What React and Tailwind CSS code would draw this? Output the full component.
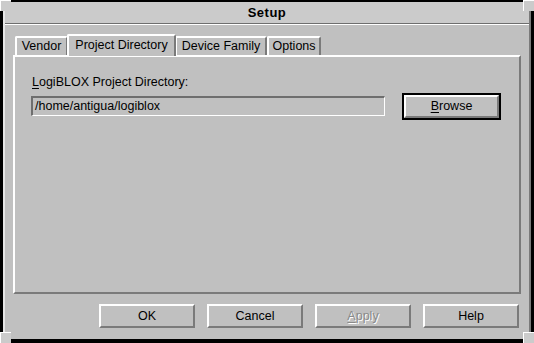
const FONT = { fontFamily: '"Liberation Sans", Arial, Helvetica, sans-serif' };

const TABS = [
  { label: "Vendor", w: "w-[53px]" },
  { label: "Project Directory", w: "w-[109px]", active: true },
  { label: "Device Family", w: "w-[92px]" },
  { label: "Options", w: "w-[54px]" },
];

function Tab({ label, w, active }) {
  if (active) {
    return (
      <div
        className={`${w} h-[22px] -mb-px z-10 -mx-px flex items-center justify-center bg-[#c0c0c0] border-t-2 border-l-2 border-r-2 border-t-white border-l-white border-r-[#7a7a7a] rounded-tl-[2px] rounded-tr-[2px] pb-[1px]`}
      >
        {label}
      </div>
    );
  }
  return (
    <div
      className={`${w} h-[19px] flex items-center justify-center bg-[#c0c0c0] border-t-2 border-l-2 border-r-2 border-t-white border-l-white border-r-[#7a7a7a] rounded-tl-[2px] rounded-tr-[2px]`}
    >
      {label}
    </div>
  );
}

function Button({ children, disabled }) {
  return (
    <button
      className={`w-[96px] h-[24px] flex items-center justify-center bg-[#c0c0c0] border-t-2 border-l-2 border-b-2 border-r-2 border-t-white border-l-white border-b-[#7a7a7a] border-r-[#7a7a7a] ${disabled ? "text-[#8a8a8a] [text-shadow:1px_1px_0_#ffffff]" : "text-black"}`}
    >
      {children}
    </button>
  );
}

export default function App() {
  return (
    <div
      className="w-[534px] h-[343px] bg-black pt-[2px] pl-[3px] pr-[3px] pb-[4px] text-[12.5px] text-black relative"
      style={FONT}
    >
      <div className="w-full h-full flex flex-col bg-[#c0c0c0] border-l-2 border-l-[#e6e6e6] border-r-2 border-r-[#7a7a7a]">
        {/* title bar */}
        <div className="h-[21px] flex items-center justify-center bg-[#cbcbcb] font-bold text-[13px] tracking-[0.5px]">
          Setup
        </div>
        <div className="h-px bg-[#6e6e6e]" />
        <div className="h-px bg-white" />

        {/* tabs */}
        <div className="flex items-end pl-[10px] h-[30px]">
          {TABS.map((t) => (
            <Tab key={t.label} {...t} />
          ))}
        </div>

        {/* panel */}
        <div className="ml-[8px] mr-[8px] h-[239px] border-t-2 border-l-2 border-b-2 border-r-2 border-t-white border-l-white border-b-[#7a7a7a] border-r-[#7a7a7a] px-[16px] pt-[18px]">
          <div className="h-[15px] leading-[15px] pl-px">
            <span className="underline underline-offset-2">L</span>ogiBLOX Project Directory:
          </div>
          <div className="flex items-start mt-[3px]">
            <div className="w-[354px] h-[20px] mt-[3px] flex items-center pl-[2px] border-t-2 border-l-2 border-b border-r border-t-[#6e6e6e] border-l-[#6e6e6e] border-b-white border-r-white">
              /home/antigua/logiblox
            </div>
            <div className="ml-[17px] w-[99px] h-[27px] border-2 border-black">
              <div className="w-full h-full flex items-center justify-center border-t-2 border-l-2 border-b-2 border-r-2 border-t-white border-l-white border-b-[#7a7a7a] border-r-[#7a7a7a]">
                <span>
                  <span className="underline underline-offset-2">B</span>rowse
                </span>
              </div>
            </div>
          </div>
        </div>

        {/* buttons */}
        <div className="flex justify-end gap-[12px] pr-[10px] pt-[10px]">
          <Button>OK</Button>
          <Button>Cancel</Button>
          <Button disabled>
            <span>
              <span className="underline underline-offset-2">A</span>pply
            </span>
          </Button>
          <Button>Help</Button>
        </div>
      </div>

      {/* window manager corner handles */}
      <div className="absolute left-0 top-0 w-[11px] h-[11px] bg-[#cbcbcb] border-t border-l border-white" />
      <div className="absolute right-0 top-0 w-[11px] h-[11px] bg-[#cbcbcb] border-t border-l border-white" />
      <div className="absolute left-0 bottom-0 w-[11px] h-[11px] bg-[#cbcbcb] border-t border-l border-white" />
      <div className="absolute right-0 bottom-0 w-[11px] h-[11px] bg-[#cbcbcb] border-t border-l border-white" />
    </div>
  );
}
